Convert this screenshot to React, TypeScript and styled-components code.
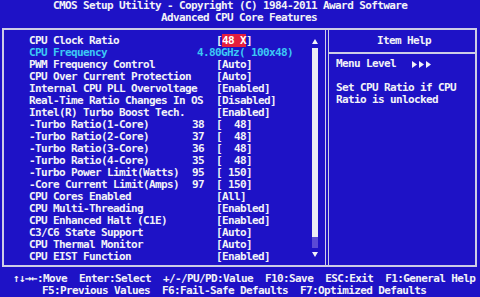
import React from "react";
import styled, { createGlobalStyle } from "styled-components";

const BLUE = "#1e12c6";
const FG = "#f2f2f8";
const CYAN = "#3cc8f4";
const LINE = "#cdcde6";
const RED = "#e41e3e";

const Global = createGlobalStyle`
  html, body { margin: 0; padding: 0; background: ${BLUE}; }
  body { width: 480px; height: 297px; overflow: hidden; }
`;

const Screen = styled.div`
  width: 480px;
  height: 297px;
  background: ${BLUE};
  color: ${FG};
  font-family: "DejaVu Sans Mono", "Liberation Mono", monospace;
  font-weight: 700;
  font-size: 11px;
  letter-spacing: -0.62px;
  line-height: 12px;
  white-space: pre;
  display: flex;
  flex-direction: column;
  overflow: hidden;
`;

const Header = styled.header`
  height: 28px;
  box-sizing: border-box;
  display: flex;
  flex-direction: column;
`;

const TitleLine = styled.div<{ $indent: number }>`
  padding-left: ${(p) => p.$indent}px;
  height: 12px;
`;

const Frame = styled.main`
  margin: 0 3px 0 2px;
  height: 239px;
  box-sizing: border-box;
  border: 2px solid ${LINE};
  display: flex;
`;

const ItemsPanel = styled.section`
  width: 321px;
  box-sizing: border-box;
  padding: 5px 7px 0 25px;
  display: flex;
`;

const List = styled.div`
  flex: 1;
  display: flex;
  flex-direction: column;
`;

const Row = styled.div<{ $cyan?: boolean }>`
  display: flex;
  height: 12px;
  color: ${(p) => (p.$cyan ? CYAN : FG)};
`;

const Label = styled.span`
  flex: 0 0 163px;
  min-width: 0;
`;

const Num = styled.span`
  flex: 0 0 24px;
`;

const Value = styled.span<{ $indent?: number }>`
  margin-left: ${(p) => p.$indent ?? 0}px;
`;

const Hi = styled.span`
  background: ${RED};
  color: #fff;
`;

const Scroll = styled.div`
  width: 6px;
  display: flex;
  flex-direction: column;
  align-items: center;
`;

const ArrowBox = styled.div<{ $h: number }>`
  height: ${(p) => p.$h}px;
  display: flex;
  align-items: center;
  justify-content: center;
`;

const Track = styled.div`
  width: 6px;
  height: 200px;
  background: #5a4ad6;
  display: flex;
  flex-direction: column;
`;

const Thumb = styled.div`
  height: 189px;
  background: #ececf4;
`;

const Divider = styled.div`
  width: 0;
  border-left: 4px double ${LINE};
`;

const HelpPanel = styled.aside`
  flex: 1;
  display: flex;
  flex-direction: column;
`;

const HelpHead = styled.div`
  height: 22px;
  border-bottom: 2px solid ${LINE};
  display: flex;
  align-items: center;
  justify-content: center;
  padding-left: 4px;
`;

const HelpBody = styled.div`
  padding: 4px 0 0 7px;
  display: flex;
  flex-direction: column;
`;

const HelpLine = styled.div`
  height: 12px;
  display: flex;
  align-items: center;
`;

const Levels = styled.svg`
  margin-left: 16px;
`;

const Footer = styled.footer`
  padding-top: 6px;
  display: flex;
  flex-direction: column;
`;

const FootLine = styled.div<{ $indent: number }>`
  height: 12px;
  padding-left: ${(p) => p.$indent}px;
`;

type Item = { label: string; num?: string; value: React.ReactNode; cyan?: boolean; shifted?: boolean };

const items: Item[] = [
  { label: "CPU Clock Ratio", value: <>[<Hi>48 X</Hi>]</> },
  { label: "CPU Frequency", value: "4.80GHz( 100x48)", cyan: true, shifted: true },
  { label: "PWM Frequency Control", value: "[Auto]" },
  { label: "CPU Over Current Protection", value: "[Auto]" },
  { label: "Internal CPU PLL Overvoltage", value: "[Enabled]" },
  { label: "Real-Time Ratio Changes In OS", value: "[Disabled]" },
  { label: "Intel(R) Turbo Boost Tech.", value: "[Enabled]" },
  { label: "-Turbo Ratio(1-Core)", num: "38", value: "[  48]" },
  { label: "-Turbo Ratio(2-Core)", num: "37", value: "[  48]" },
  { label: "-Turbo Ratio(3-Core)", num: "36", value: "[  48]" },
  { label: "-Turbo Ratio(4-Core)", num: "35", value: "[  48]" },
  { label: "-Turbo Power Limit(Watts)", num: "95", value: "[ 150]" },
  { label: "-Core Current Limit(Amps)", num: "97", value: "[ 150]" },
  { label: "CPU Cores Enabled", value: "[All]" },
  { label: "CPU Multi-Threading", value: "[Enabled]" },
  { label: "CPU Enhanced Halt (C1E)", value: "[Enabled]" },
  { label: "C3/C6 State Support", value: "[Auto]" },
  { label: "CPU Thermal Monitor", value: "[Auto]" },
  { label: "CPU EIST Function", value: "[Enabled]" },
];

const Tri = ({ down }: { down?: boolean }) => (
  <svg width="6" height="6" viewBox="0 0 6 6">
    <polygon points={down ? "0,1 6,1 3,6" : "3,0 6,5 0,5"} fill={FG} />
  </svg>
);

export default function App() {
  return (
    <>
      <Global />
      <Screen>
        <Header>
          <TitleLine $indent={53}>CMOS Setup Utility - Copyright (C) 1984-2011 Award Software</TitleLine>
          <TitleLine $indent={161}>Advanced CPU Core Features</TitleLine>
        </Header>
        <Frame>
          <ItemsPanel>
            <List>
              {items.map((it) => (
                <Row key={it.label} $cyan={it.cyan}>
                  <Label>{it.label}</Label>
                  {!it.shifted && <Num>{it.num ?? ""}</Num>}
                  <Value $indent={it.shifted ? 5 : 0}>{it.value}</Value>
                </Row>
              ))}
            </List>
            <Scroll>
              <ArrowBox $h={13}>
                <Tri />
              </ArrowBox>
              <Track>
                <Thumb />
              </Track>
              <ArrowBox $h={11}>
                <Tri down />
              </ArrowBox>
            </Scroll>
          </ItemsPanel>
          <Divider />
          <HelpPanel>
            <HelpHead>Item Help</HelpHead>
            <HelpBody>
              <HelpLine>
                Menu Level
                <Levels width="20" height="7" viewBox="0 0 20 7">
                  <polygon points="0,0 5,3.5 0,7" fill={FG} />
                  <polygon points="7,0 12,3.5 7,7" fill={FG} />
                  <polygon points="14,0 19,3.5 14,7" fill={FG} />
                </Levels>
              </HelpLine>
              <HelpLine />
              <HelpLine>Set CPU Ratio if CPU</HelpLine>
              <HelpLine>Ratio is unlocked</HelpLine>
            </HelpBody>
          </HelpPanel>
        </Frame>
        <Footer>
          <FootLine $indent={13}>↑↓→←:Move  Enter:Select  +/-/PU/PD:Value  F10:Save  ESC:Exit  F1:General Help</FootLine>
          <FootLine $indent={42}>F5:Previous Values  F6:Fail-Safe Defaults  F7:Optimized Defaults</FootLine>
        </Footer>
      </Screen>
    </>
  );
}
